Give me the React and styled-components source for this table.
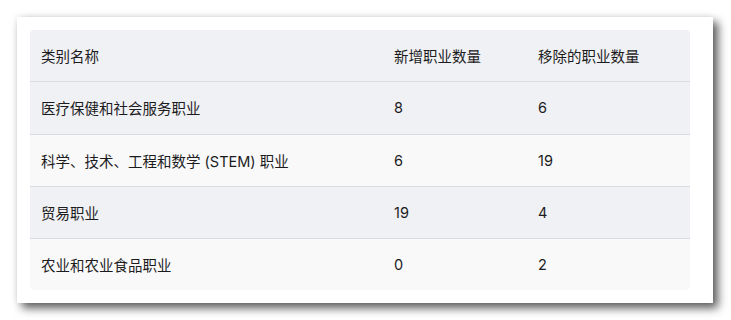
import React from 'react';
import styled, { createGlobalStyle } from 'styled-components';

const GlobalStyle = createGlobalStyle`
  body {
    margin: 0;
    background: #ffffff;
    font-family: Inter, "Noto Sans CJK SC", sans-serif;
  }
`;

const Page = styled.div`
  padding: 17px;
`;

const Card = styled.div`
  width: 670px;
  padding: 13px;
  background: #ffffff;
  box-shadow: 5px 5px 9px rgba(0, 0, 0, 0.65), -1px -1px 6px rgba(0, 0, 0, 0.06);
`;

const Table = styled.table`
  width: 660px;
  border-collapse: collapse;
  border-radius: 4px;
  overflow: hidden;
  table-layout: fixed;
  font-size: 14.5px;
  color: #1c1c1e;
`;

const Row = styled.tr`
  background: ${p => (p.$odd ? '#f9f9f9' : '#f0f1f4')};
  & + & {
    border-top: 1px solid #dcdce0;
  }
`;

const Cell = styled.td`
  height: 51.25px;
  padding: 0 11px;
  text-align: left;
  font-weight: 400;
  white-space: nowrap;
`;

const HeadCell = styled(Cell).attrs({ as: 'th' })``;

const rows = [
  ['医疗保健和社会服务职业', 8, 6],
  ['科学、技术、工程和数学 (STEM) 职业', 6, 19],
  ['贸易职业', 19, 4],
  ['农业和农业食品职业', 0, 2],
];

export default function App() {
  return (
    <Page>
      <GlobalStyle />
      <Card>
        <Table>
          <colgroup>
            <col style={{ width: 353 }} />
            <col style={{ width: 144 }} />
            <col style={{ width: 163 }} />
          </colgroup>
          <tbody>
            <Row>
              <HeadCell>类别名称</HeadCell>
              <HeadCell>新增职业数量</HeadCell>
              <HeadCell>移除的职业数量</HeadCell>
            </Row>
            {rows.map((r, i) => (
              <Row key={r[0]} $odd={i % 2 === 1}>
                <Cell>{r[0]}</Cell>
                <Cell>{r[1]}</Cell>
                <Cell>{r[2]}</Cell>
              </Row>
            ))}
          </tbody>
        </Table>
      </Card>
    </Page>
  );
}
